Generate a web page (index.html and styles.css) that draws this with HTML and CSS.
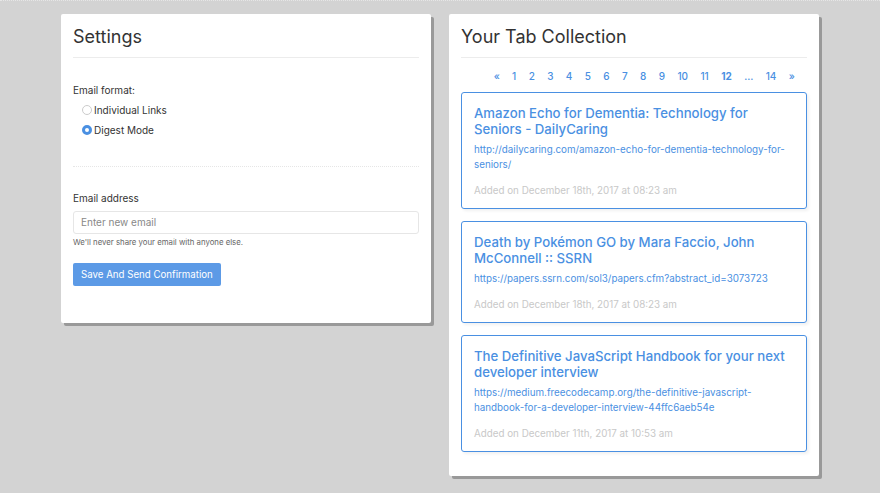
FILE: index.html
```html
<!DOCTYPE html>
<html lang="en">
<head>
<meta charset="utf-8">
<title>Tab Collection</title>
<link rel="stylesheet" href="styles.css">
</head>
<body>
<div class="page">
  <section class="card">
    <h1 class="card-title">Settings</h1>
    <div class="group">
      <div class="label">Email format:</div>
      <label class="radio"><span class="dot"></span>Individual Links</label>
      <label class="radio"><span class="dot checked"></span>Digest Mode</label>
    </div>
    <div class="divider"></div>
    <div class="group email">
      <div class="label">Email address</div>
      <div class="input">Enter new email</div>
      <div class="help">We'll never share your email with anyone else.</div>
      <div class="btn">Save And Send Confirmation</div>
    </div>
  </section>
  <section class="card collection">
    <h1 class="card-title">Your Tab Collection</h1>
    <nav class="pager">
      <span>«</span><span>1</span><span>2</span><span>3</span><span>4</span><span>5</span><span>6</span><span>7</span><span>8</span><span>9</span><span>10</span><span>11</span><span class="active">12</span><span>…</span><span>14</span><span>»</span>
    </nav>
    <article class="tab">
      <h2 class="tab-title">Amazon Echo for Dementia: Technology for Seniors - DailyCaring</h2>
      <div class="tab-url">http://dailycaring.com/amazon-echo-for-dementia-technology-for-seniors/</div>
      <div class="tab-date">Added on December 18th, 2017 at 08:23 am</div>
    </article>
    <article class="tab">
      <h2 class="tab-title">Death by Pokémon GO by Mara Faccio, John McConnell :: SSRN</h2>
      <div class="tab-url">https://papers.ssrn.com/sol3/papers.cfm?abstract_id=3073723</div>
      <div class="tab-date">Added on December 18th, 2017 at 08:23 am</div>
    </article>
    <article class="tab">
      <h2 class="tab-title">The Definitive JavaScript Handbook for your next developer interview</h2>
      <div class="tab-url">https://medium.freecodecamp.org/the-definitive-javascript-handbook-for-a-developer-interview-44ffc6aeb54e</div>
      <div class="tab-date">Added on December 11th, 2017 at 10:53 am</div>
    </article>
  </section>
</div>
</body>
</html>
```
FILE: styles.css
```css
html, body {
  margin: 0;
  padding: 0;
}
body {
  background: #d3d3d3;
  font-family: Inter, "Liberation Sans", Arial, sans-serif;
  color: #333;
  border-top: 1px dotted #e6e6e6;
  min-height: 492px;
}
.page {
  width: 758px;
  margin: 13px auto 0;
  display: grid;
  grid-template-columns: 370px 370px;
  column-gap: 18px;
  align-items: start;
}
.card {
  background: #fff;
  border-radius: 2px;
  box-shadow: 3px 3px 0 #999;
  padding: 11px 12px 0;
}
.card.collection {
  padding-bottom: 24px;
}
.card-title {
  margin: 0;
  font-size: 18px;
  font-weight: 400;
  line-height: 24px;
  color: #333;
  padding-bottom: 8px;
  border-bottom: 1px solid #ececec;
}
.group {
  padding-top: 25px;
}
.label {
  font-size: 10px;
  line-height: 15px;
  color: #333;
}
.radio {
  display: flex;
  align-items: center;
  height: 20px;
  padding-left: 9px;
  font-size: 10px;
  color: #333;
}
.radio:first-of-type {
  margin-top: 2px;
}
.dot {
  width: 10px;
  height: 10px;
  border-radius: 50%;
  border: 1px solid #ccc;
  box-sizing: border-box;
  margin-right: 2px;
  flex: none;
}
.dot.checked {
  border: 3px solid #4a90e2;
  background: #fff;
}
.divider {
  margin-top: 26px;
  border-top: 1px dotted #e6e6e6;
}
.email {
  padding-top: 24px;
  padding-bottom: 37px;
}
.email .label {
  margin-bottom: 5px;
}
.input {
  height: 23px;
  box-sizing: border-box;
  border: 1px solid #e6e6e6;
  border-radius: 3px;
  padding: 0 7px;
  font-size: 10px;
  line-height: 21px;
  color: #888;
}
.help {
  font-size: 7.8px;
  line-height: 12px;
  margin-top: 2px;
  color: #666;
}
.btn {
  display: inline-block;
  margin-top: 15px;
  background: #5c9ae6;
  color: #fff;
  font-size: 9.7px;
  line-height: 23px;
  padding: 0 8px;
  border-radius: 2px;
}
.pager {
  display: flex;
  justify-content: flex-end;
  padding: 9px 6px 0 0;
  height: 18px;
  align-items: center;
  margin-bottom: 7px;
}
.pager span {
  padding: 0 6.2px;
  font-size: 10px;
  font-weight: 500;
  color: #4a90e2;
}
.pager span.active {
  font-weight: 700;
}
.tab {
  border: 1px solid #4a90e2;
  border-radius: 3px;
  box-shadow: 2px 2px 3px rgba(0,0,0,0.06);
  padding: 12px 12px 10px;
  margin-bottom: 12px;
}
.tab:last-child {
  margin-bottom: 0;
}
.tab-title {
  margin: 0;
  font-size: 13.2px;
  line-height: 16px;
  font-weight: 500;
  color: #4a90e2;
}
.tab-url {
  margin-top: 5px;
  font-size: 9.8px;
  line-height: 15px;
  color: #4a90e2;
}
.tab-date {
  margin-top: 11px;
  font-size: 9.8px;
  line-height: 15px;
  color: #c8c8c8;
}
```
